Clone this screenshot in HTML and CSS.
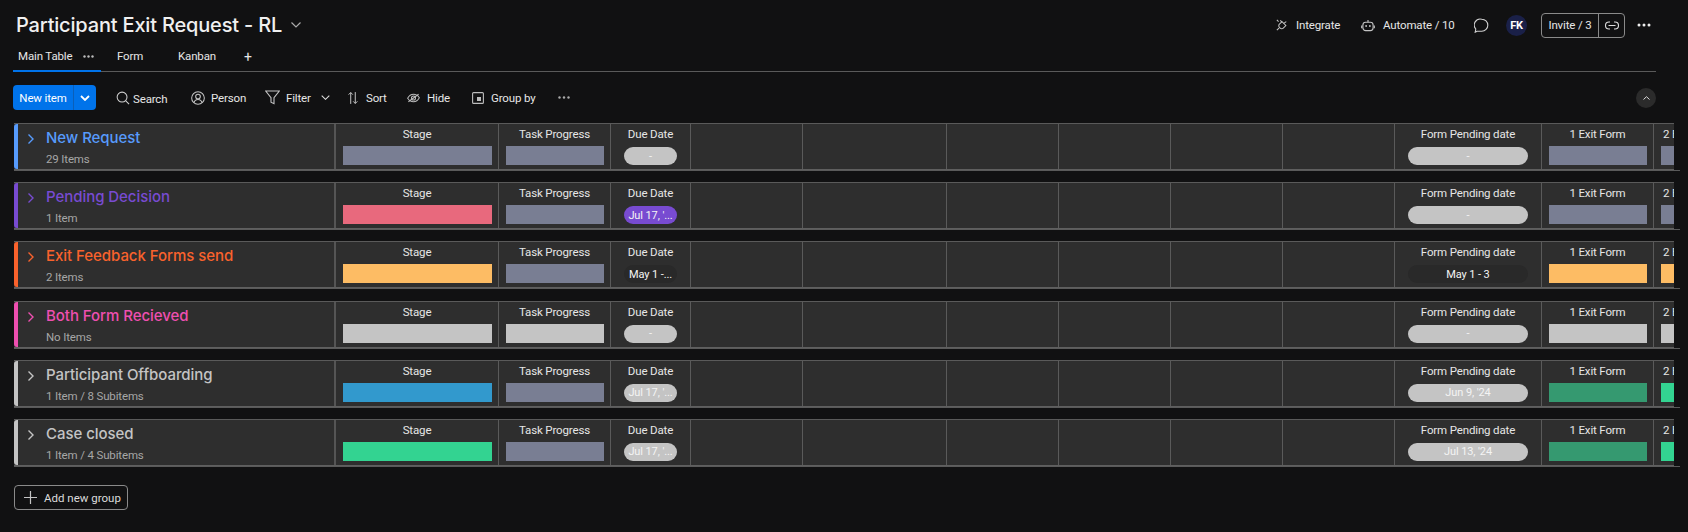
FILE: index.html
```html
<!DOCTYPE html>
<html lang="en">
<head>
<meta charset="utf-8">
<title>Participant Exit Request - RL</title>
<link rel="stylesheet" href="styles.css">
</head>
<body>
<svg class="defs" width="0" height="0" aria-hidden="true">
  <symbol id="chev" viewBox="0 0 8 12"><path d="M1.500 1.500l4.500 4.500-4.500 4.500" fill="none" stroke="currentColor" stroke-width="1.400"/></symbol>
</svg>
<header class="head">
  <div class="title-row">
    <h1 class="board-title">Participant Exit Request - RL</h1>
    <svg class="title-chev" width="10" height="6" viewBox="0 0 10 6"><path d="M.5.5 5 5 9.5.5" fill="none" stroke="#aaa" stroke-width="1.2"/></svg>
    <div class="head-actions">
      <span class="act act-int">
        <svg width="12" height="13" viewBox="0 0 14 15"><g fill="none" stroke="#c4c4c4" stroke-width="1.200"><path d="M4 6l3-3 4.500 4.500-3 3a2.500 2.500 0 0 1-3.600 0l-.9-.9a2.500 2.500 0 0 1 0-3.600z"/><path d="M1 1l2 2M5 1.500l2 2M9 5l3-2M3.500 10.500 1 13"/></g></svg>
        Integrate</span>
      <span class="act act-auto">
        <svg width="14" height="13" viewBox="0 0 15 14"><g fill="none" stroke="#c4c4c4" stroke-width="1.200"><rect x="2" y="3.500" width="11" height="9" rx="3"/><path d="M7.500 1v2.500M.7 7v3M14.300 7v3"/></g><circle cx="5.500" cy="7.500" r="1" fill="#c4c4c4"/><circle cx="9.500" cy="7.500" r="1" fill="#c4c4c4"/></svg>
        Automate / 10</span>
      <svg class="bubble" width="15" height="15" viewBox="0 0 15 15"><path d="M7.800 1.200a6 6 0 0 1 0 12H3l-1.800 1 .6-3.200a6 6 0 0 1 6-9.800z" fill="none" stroke="#d0d0d0" stroke-width="1.100"/></svg>
      <span class="avatar">FK</span>
      <span class="invite"><span class="invite-label">Invite / 3</span><span class="invite-link">
        <svg width="14" height="9" viewBox="0 0 14 9"><g fill="none" stroke="#ddd" stroke-width="1.100"><path d="M5 1H4a3.500 3.500 0 0 0 0 7h1M9 1h1a3.500 3.500 0 0 1 0 7H9M3.500 4.500h7"/></g></svg>
      </span></span>
      <svg class="more" width="14" height="4" viewBox="0 0 14 4"><circle cx="2" cy="2" r="1.500" fill="#eee"/><circle cx="7" cy="2" r="1.500" fill="#eee"/><circle cx="12" cy="2" r="1.500" fill="#eee"/></svg>
    </div>
  </div>
  <nav class="tabs">
    <span class="tab tab-main">Main Table
      <svg class="tab-dots" width="11" height="3" viewBox="0 0 11 3"><circle cx="1.500" cy="1.500" r="1.200" fill="#bbb"/><circle cx="5.500" cy="1.500" r="1.200" fill="#bbb"/><circle cx="9.500" cy="1.500" r="1.200" fill="#bbb"/></svg>
    </span>
    <span class="tab tab-form">Form</span>
    <span class="tab tab-kanban">Kanban</span>
    <span class="tab tab-plus">+</span>
  </nav>
</header>

<div class="toolbar">
  <span class="new-item"><span class="new-label">New item</span><span class="new-drop"><svg width="10" height="6" viewBox="0 0 10 6"><path d="M1 1l4 4 4-4" fill="none" stroke="#fff" stroke-width="1.800"/></svg></span></span>
  <span class="tool tool-search">
    <svg width="14" height="14" viewBox="0 0 15 15"><g fill="none" stroke="#cfcfcf" stroke-width="1.100"><circle cx="6.500" cy="6.500" r="5.300"/><path d="M10.500 10.500l3.500 3.500"/></g></svg>
    <span class="search-text">Search</span></span>
  <span class="tool tool-person">
    <svg width="14" height="14" viewBox="0 0 15 15"><g fill="none" stroke="#c4c4c4" stroke-width="1.100"><circle cx="7.500" cy="7.500" r="6.800"/><circle cx="7.500" cy="6" r="2.500"/><path d="M3.300 12.500c.5-2.400 2.300-3.500 4.200-3.500s3.700 1.100 4.200 3.500"/></g></svg>
    Person</span>
  <span class="tool tool-filter">
    <svg width="15" height="15" viewBox="0 0 15 15"><path d="M.7 1h13.600L9 7.700v6l-3-1.500V7.700z" fill="none" stroke="#c4c4c4" stroke-width="1.100"/></svg>
    Filter
    <svg class="filter-chev" width="9" height="5" viewBox="0 0 9 5"><path d="M.7.7 4.500 4.300 8.300.7" fill="none" stroke="#ddd" stroke-width="1.100"/></svg></span>
  <span class="tool tool-sort">
    <svg width="10" height="14" viewBox="0 0 11 15"><g fill="none" stroke="#c4c4c4" stroke-width="1.100"><path d="M3 14V1.500M.7 3.800 3 1.500l2.300 2.300M8 1v12.500M5.700 11.200 8 13.500l2.300-2.300"/></g></svg>
    Sort</span>
  <span class="tool tool-hide">
    <svg width="13" height="10" viewBox="0 0 14 10"><g fill="none" stroke="#bdbdbd" stroke-width="1.100"><path d="M.7 5.300C2.300 2.300 4.500 1 7 1s4.700 1.300 6.300 3.700C11.700 7.700 9.500 9 7 9S2.300 7.800.7 5.300z"/><circle cx="7" cy="5" r="2.200"/><path d="M1.500 9 12.500 1"/></g></svg>
    Hide</span>
  <span class="tool tool-group">
    <svg width="12" height="12" viewBox="0 0 12 12"><rect x=".6" y=".6" width="10.800" height="10.800" rx="1" fill="none" stroke="#bdbdbd" stroke-width="1.100"/><rect x="5" y="5" width="4" height="4" fill="#bdbdbd"/></svg>
    Group by</span>
  <svg class="tool-more" width="12" height="3" viewBox="0 0 12 3"><circle cx="1.500" cy="1.500" r="1.200" fill="#aaa"/><circle cx="6" cy="1.500" r="1.200" fill="#aaa"/><circle cx="10.500" cy="1.500" r="1.200" fill="#aaa"/></svg>
  <span class="collapse"><svg width="7" height="4" viewBox="0 0 7 4"><path d="M.5 3.500 3.500.7l3 2.800" fill="none" stroke="#ddd" stroke-width="1"/></svg></span>
</div>

<main class="board">
  <section class="group">
    <div class="grid">
      <div class="cell name c-blue"><svg class="chev" width="8" height="12"><use href="#chev"/></svg><div class="name-text"><h2 class="gtitle">New Request</h2><p class="gsub">29 Items</p></div></div>
      <div class="cell"><span class="lbl">Stage</span><span class="bar s-grey"></span></div>
      <div class="cell"><span class="lbl">Task Progress</span><span class="bar s-grey"></span></div>
      <div class="cell"><span class="lbl">Due Date</span><span class="pill p-light">-</span></div>
      <div class="cell"></div><div class="cell"></div><div class="cell"></div><div class="cell"></div><div class="cell"></div><div class="cell"></div>
      <div class="cell"><span class="lbl">Form Pending date</span><span class="pill p-light">-</span></div>
      <div class="cell"><span class="lbl">1 Exit Form</span><span class="bar s-grey"></span></div>
      <div class="cell last"><span class="lbl">2 Exit Form</span><span class="bar s-grey"></span></div>
    </div>
  </section>
  <section class="group">
    <div class="grid">
      <div class="cell name c-purple"><svg class="chev" width="8" height="12"><use href="#chev"/></svg><div class="name-text"><h2 class="gtitle">Pending Decision</h2><p class="gsub">1 Item</p></div></div>
      <div class="cell"><span class="lbl">Stage</span><span class="bar s-red"></span></div>
      <div class="cell"><span class="lbl">Task Progress</span><span class="bar s-grey"></span></div>
      <div class="cell"><span class="lbl">Due Date</span><span class="pill p-purple">Jul 17, '...</span></div>
      <div class="cell"></div><div class="cell"></div><div class="cell"></div><div class="cell"></div><div class="cell"></div><div class="cell"></div>
      <div class="cell"><span class="lbl">Form Pending date</span><span class="pill p-light">-</span></div>
      <div class="cell"><span class="lbl">1 Exit Form</span><span class="bar s-grey"></span></div>
      <div class="cell last"><span class="lbl">2 Exit Form</span><span class="bar s-grey"></span></div>
    </div>
  </section>
  <section class="group">
    <div class="grid">
      <div class="cell name c-orange"><svg class="chev" width="8" height="12"><use href="#chev"/></svg><div class="name-text"><h2 class="gtitle">Exit Feedback Forms send</h2><p class="gsub">2 Items</p></div></div>
      <div class="cell"><span class="lbl">Stage</span><span class="bar s-amber"></span></div>
      <div class="cell"><span class="lbl">Task Progress</span><span class="bar s-grey"></span></div>
      <div class="cell"><span class="lbl">Due Date</span><span class="pill p-dark">May 1 -...</span></div>
      <div class="cell"></div><div class="cell"></div><div class="cell"></div><div class="cell"></div><div class="cell"></div><div class="cell"></div>
      <div class="cell"><span class="lbl">Form Pending date</span><span class="pill p-dark">May 1 - 3</span></div>
      <div class="cell"><span class="lbl">1 Exit Form</span><span class="bar s-amber"></span></div>
      <div class="cell last"><span class="lbl">2 Exit Form</span><span class="bar s-amber"></span></div>
    </div>
  </section>
  <section class="group">
    <div class="grid">
      <div class="cell name c-pink"><svg class="chev" width="8" height="12"><use href="#chev"/></svg><div class="name-text"><h2 class="gtitle">Both Form Recieved</h2><p class="gsub">No Items</p></div></div>
      <div class="cell"><span class="lbl">Stage</span><span class="bar s-light"></span></div>
      <div class="cell"><span class="lbl">Task Progress</span><span class="bar s-light"></span></div>
      <div class="cell"><span class="lbl">Due Date</span><span class="pill p-light">-</span></div>
      <div class="cell"></div><div class="cell"></div><div class="cell"></div><div class="cell"></div><div class="cell"></div><div class="cell"></div>
      <div class="cell"><span class="lbl">Form Pending date</span><span class="pill p-light">-</span></div>
      <div class="cell"><span class="lbl">1 Exit Form</span><span class="bar s-light"></span></div>
      <div class="cell last"><span class="lbl">2 Exit Form</span><span class="bar s-light"></span></div>
    </div>
  </section>
  <section class="group">
    <div class="grid">
      <div class="cell name c-grey"><svg class="chev" width="8" height="12"><use href="#chev"/></svg><div class="name-text"><h2 class="gtitle">Participant Offboarding</h2><p class="gsub">1 Item / 8 Subitems</p></div></div>
      <div class="cell"><span class="lbl">Stage</span><span class="bar s-blue"></span></div>
      <div class="cell"><span class="lbl">Task Progress</span><span class="bar s-grey"></span></div>
      <div class="cell"><span class="lbl">Due Date</span><span class="pill p-light">Jul 17, '...</span></div>
      <div class="cell"></div><div class="cell"></div><div class="cell"></div><div class="cell"></div><div class="cell"></div><div class="cell"></div>
      <div class="cell"><span class="lbl">Form Pending date</span><span class="pill p-light">Jun 9, '24</span></div>
      <div class="cell"><span class="lbl">1 Exit Form</span><span class="bar s-dgreen"></span></div>
      <div class="cell last"><span class="lbl">2 Exit Form</span><span class="bar s-green"></span></div>
    </div>
  </section>
  <section class="group">
    <div class="grid">
      <div class="cell name c-grey"><svg class="chev" width="8" height="12"><use href="#chev"/></svg><div class="name-text"><h2 class="gtitle">Case closed</h2><p class="gsub">1 Item / 4 Subitems</p></div></div>
      <div class="cell"><span class="lbl">Stage</span><span class="bar s-green"></span></div>
      <div class="cell"><span class="lbl">Task Progress</span><span class="bar s-grey"></span></div>
      <div class="cell"><span class="lbl">Due Date</span><span class="pill p-light">Jul 17, '...</span></div>
      <div class="cell"></div><div class="cell"></div><div class="cell"></div><div class="cell"></div><div class="cell"></div><div class="cell"></div>
      <div class="cell"><span class="lbl">Form Pending date</span><span class="pill p-light">Jul 13, '24</span></div>
      <div class="cell"><span class="lbl">1 Exit Form</span><span class="bar s-dgreen"></span></div>
      <div class="cell last"><span class="lbl">2 Exit Form</span><span class="bar s-green"></span></div>
    </div>
  </section>
  <button class="add-group" type="button">
    <svg width="13" height="13" viewBox="0 0 13 13"><path d="M6.500 0v13M0 6.500h13" stroke="#c4c4c4" stroke-width="1.200" fill="none"/></svg>
    Add new group</button>
</main>
</body>
</html>
```

FILE: styles.css
```css
* { box-sizing: border-box; }
html, body { margin: 0; height: 100%; }
body {
  width: 1688px;
  height: 532px;
  overflow: hidden;
  background: #111112;
  color: #e6e6e6;
  font-family: "Roboto", "Liberation Sans", sans-serif;
  font-size: 11.5px;
  letter-spacing: -0.15px;
}
.defs { position: absolute; }

.head { padding: 0 32px 0 13px; height: 72px; }
.title-row { display: flex; align-items: center; height: 50px; padding: 0 5px 0 3px; }
.board-title { margin: 0; font-family: "Inter", sans-serif; font-size: 20px; font-weight: 500; color: #f0f0f0; letter-spacing: -0.18px; white-space: nowrap; }
.title-chev { margin-left: 9px; }
.head-actions { margin-left: auto; display: flex; align-items: center; }
.act { display: flex; align-items: center; gap: 8px; color: #e6e6e6; white-space: nowrap; }
.act-int { width: 85px; }
.act-auto { width: 113px; }
.avatar {
  margin-left: 17px; width: 21px; height: 21px; border-radius: 50%;
  background: #1a2048; color: #fff; font-size: 11px; font-weight: 700;
  display: flex; align-items: center; justify-content: center;
}
.invite { margin-left: 14px; display: flex; height: 25px; border: 1px solid #8a8a8a; border-radius: 4px; }
.invite-label { width: 57px; display: flex; align-items: center; justify-content: center; white-space: nowrap; border-right: 1px solid #8a8a8a; }
.invite-link { width: 25px; display: flex; align-items: center; justify-content: center; }
.more { margin-left: 12px; }

.tabs { display: flex; height: 22px; border-bottom: 1px solid #5a5a5a; }
.tab { display: flex; align-items: flex-start; line-height: 13px; color: #e6e6e6; white-space: nowrap; }
.tab-main { width: 88px; padding-left: 5px; border-bottom: 2px solid #0073ea; height: 22px; }
.tab-dots { margin: 5px 0 0 11px; flex: none; }
.tab-form { margin-left: 16px; width: 61px; }
.tab-kanban { width: 66px; }
.tab-plus { font-size: 14px; padding-top: 1px; }

.toolbar { display: flex; align-items: center; height: 25px; margin-top: 13px; padding-left: 13px; }
.new-item { display: flex; width: 83px; height: 25px; background: #0073ea; border-radius: 4px; color: #fff; white-space: nowrap; }
.new-label { width: 61px; display: flex; align-items: center; justify-content: center; border-right: 1px solid #0b5fb8; }
.new-drop { flex: 1; display: flex; align-items: center; justify-content: center; }
.tool { display: flex; align-items: center; gap: 6px; color: #e6e6e6; white-space: nowrap; flex: none; }
.tool-search { margin-left: 20px; width: 75px; gap: 3px; }
.search-text { padding-top: 2px; }
.tool-person { width: 74px; }
.tool-filter { width: 83px; padding-right: 18px; }
.filter-chev { margin-left: auto; }
.tool-sort { width: 59px; gap: 8px; }
.tool-hide { width: 65px; gap: 7px; }
.tool-group { width: 86px; gap: 7px; }
.collapse {
  margin-left: auto; margin-right: 32px; width: 20px; height: 20px; border-radius: 50%;
  background: #2b2b2b; display: flex; align-items: center; justify-content: center;
}

.board { margin-top: 13px; padding-left: 14px; display: flex; flex-direction: column; gap: 11.2px; align-items: flex-start; }
.group { width: 1666px; height: 48px; border-bottom: 1px solid #5a5a5a; }
.grid {
  width: 1660px; height: 47px; overflow: hidden;
  display: grid;
  grid-template-columns: 322px 163px 112px 80px 112px 144px 112px 112px 112px 112px 147px 112px 112px;
  background: #2e2e2e;
  border-top: 1px solid #5a5a5a;
  border-bottom: 1px solid #5f5f5f;
}
.cell { display: flex; flex-direction: column; align-items: center; border-right: 1px solid #5a5a5a; min-width: 0; }
.lbl { display: block; height: 22px; line-height: 20px; color: #e6e6e6; white-space: nowrap; }
.bar { display: block; height: 19px; width: calc(100% - 13px); }
.pill {
  display: flex; align-items: center; justify-content: center;
  margin-top: 1px; height: 18px; width: calc(100% - 26px);
  border-radius: 9px; font-size: 11px; letter-spacing: -0.1px; color: #f4f4f4; white-space: nowrap;
}
.last { align-items: flex-start; border-right: 0; padding-left: 7px; }
.last .lbl { padding-left: 2px; }

.s-grey { background: #797e93; }
.s-red { background: #e8697d; }
.s-amber { background: #fdbc64; }
.s-light { background: #c4c4c4; }
.s-blue { background: #3299cd; }
.s-green { background: #33d391; }
.s-dgreen { background: #359970; }
.p-light { background: #c4c4c4; }
.p-purple { background: #784bd1; }
.p-dark { background: #292929; }

.name { flex-direction: row; align-items: flex-start; border-right: 2px solid #555; border-left: 4px solid; border-radius: 3px 0 0 3px; }
.chev { margin: 9px 0 0 9px; flex: none; }
.name-text { margin-left: 11px; }
.gtitle { margin: 4px 0 0; font-family: "Inter", sans-serif; font-size: 15px; font-weight: 500; line-height: 20px; letter-spacing: -0.05px; white-space: nowrap; }
.gsub { margin: 4px 0 0; line-height: 14px; color: #a6a6a6; white-space: nowrap; }
.c-blue { border-left-color: #579bfc; }
.c-blue .chev, .c-blue .gtitle { color: #579bfc; }
.c-purple { border-left-color: #784bd1; }
.c-purple .chev, .c-purple .gtitle { color: #784bd1; }
.c-orange { border-left-color: #f9622c; }
.c-orange .chev, .c-orange .gtitle { color: #f9622c; }
.c-pink { border-left-color: #ee4fb0; }
.c-pink .chev, .c-pink .gtitle { color: #ee4fb0; }
.c-grey { border-left-color: #c4c4c4; }
.c-grey .chev, .c-grey .gtitle { color: #c4c4c4; }

.add-group {
  margin-top: 7px; width: 114px; height: 25px; padding: 0 0 0 9px;
  display: flex; align-items: center; gap: 7px;
  background: transparent; border: 1px solid #8a8a8a; border-radius: 4px;
  color: #dcdcdc; font: inherit; letter-spacing: 0; white-space: nowrap;
}
```
